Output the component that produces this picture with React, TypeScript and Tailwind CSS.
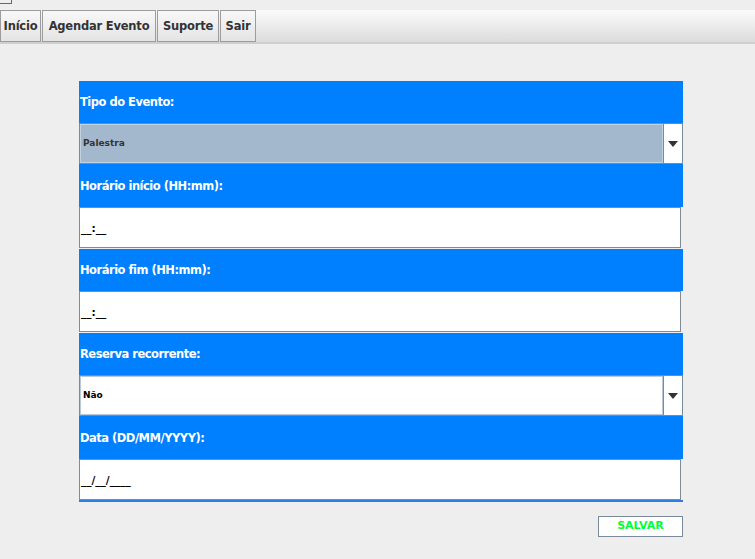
import React from 'react';

const font = { fontFamily: '"DejaVu Sans", Verdana, sans-serif' };

const menuItems = [
  { label: 'Início', w: 'w-[41px]' },
  { label: 'Agendar Evento', w: 'w-[114px]' },
  { label: 'Suporte', w: 'w-[62px]' },
  { label: 'Sair', w: 'w-[36px]' },
];

const Label: React.FC<{ text: string; h?: string }> = ({ text, h = 'h-[42px]' }) => (
  <div className={`${h} bg-[#0080ff] flex items-center pl-px pt-[2px] text-[11.5px] font-bold tracking-[-0.5px] text-white`}>
    {text}
  </div>
);

const Combo: React.FC<{ value: string; selected?: boolean }> = ({ value, selected }) => (
  <div className="h-[41px] flex border border-[#7a8a99] bg-white">
    <div
      className={`flex-1 flex items-center pl-[2px] text-[9px] font-bold border ${
        selected ? 'bg-[#a3b8cc] border-[#c3d2e0] text-[#333333]' : 'bg-white border-[#b8c8d8] text-black'
      }`}
    >
      {value}
    </div>
    <div className="w-[19px] flex items-center justify-center border-l border-[#7a8a99] bg-white">
      <svg width="10" height="6" viewBox="0 0 10 6">
        <path d="M0 0 H10 L5 6 Z" fill="#333333" />
      </svg>
    </div>
  </div>
);

const MaskInput: React.FC<{ mask: string; last?: boolean }> = ({ mask, last }) => (
  <div className={last ? 'h-[43px] border-b-2 border-[#2a7fe0]' : 'h-[42px]'}>
    <div className="h-[41px] mr-[2px] bg-white border border-[#828a92] flex items-center pl-px pt-[2px] text-[10.5px] font-bold text-black">
      {mask}
    </div>
  </div>
);

export default function App() {
  return (
    <div className="w-[755px] h-[559px] bg-[#eeeeee] overflow-hidden" style={font}>
      <div className="h-[10px]">
        <div className="w-[12px] h-[4px] border-r border-b border-[#5a6a80]" />
      </div>
      <div className="h-[34px] flex bg-gradient-to-b from-[#fbfbfb] to-[#dcdcdc] border-b-2 border-[#cfcfcf]">
        {menuItems.map((m, i) => (
          <div
            key={i}
            className={`${m.w} h-[32px] mr-px pt-[2px] flex items-center justify-center border border-[#9c9c9c] bg-gradient-to-b from-[#f8f8f8] to-[#e4e4e4] text-[11.5px] font-bold tracking-[-0.2px] text-[#333333]`}
          >
            {m.label}
          </div>
        ))}
      </div>
      <div className="ml-[79px] mt-[37px] w-[604px] flex flex-col">
        <Label text="Tipo do Evento:" />
        <Combo value="Palestra" selected />
        <Label text="Horário início (HH:mm):" h="h-[43px]" />
        <MaskInput mask="__:__" />
        <Label text="Horário fim (HH:mm):" />
        <MaskInput mask="__:__" />
        <Label text="Reserva recorrente:" />
        <Combo value="Não" />
        <Label text="Data (DD/MM/YYYY):" h="h-[43px]" />
        <MaskInput mask="__/__/____" last />
        <div className="flex justify-end mt-[14px]">
          <button className="w-[85px] h-[21px] bg-white border border-[#7a8a9a] text-[11px] font-bold text-[#00ff33]">
            SALVAR
          </button>
        </div>
      </div>
    </div>
  );
}
